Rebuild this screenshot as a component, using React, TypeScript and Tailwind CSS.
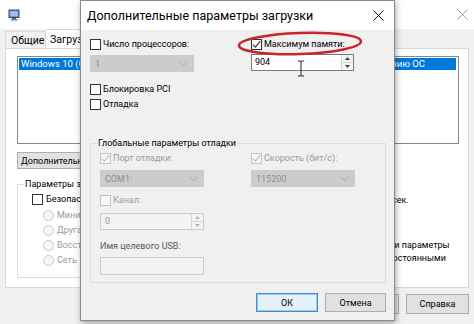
import React from "react";

function Check({ checked, disabled }: { checked?: boolean; disabled?: boolean }) {
  return (
    <span
      className={
        disabled
          ? "w-[11px] h-[11px] border border-[#c4c4c4] bg-[#f7f7f7] flex items-center justify-center shrink-0"
          : "w-[11px] h-[11px] border border-[#333333] bg-white flex items-center justify-center shrink-0"
      }
    >
      {checked && (
        <svg width="9" height="9" viewBox="0 0 9 9">
          <path d="M0.8 4.6 L3.4 7.2 L8.3 1.2" stroke={disabled ? "#bdbdbd" : "#333333"} fill="none" strokeWidth="1.1" />
        </svg>
      )}
    </span>
  );
}

function Radio() {
  return <span className="w-[11px] h-[11px] rounded-full border border-[#c8c8c8] bg-[#f7f7f7] shrink-0" />;
}

function Chevron() {
  return (
    <svg width="9" height="6" viewBox="0 0 9 6">
      <path d="M0.5 0.8 L4.5 4.8 L8.5 0.8" stroke="#a8a8a8" fill="none" strokeWidth="1" />
    </svg>
  );
}

function Combo({ text }: { text: string }) {
  return (
    <div className="w-[104px] h-[17px] bg-[#cccccc] flex items-center justify-between pl-[5px] pr-[6px] text-[#8e8e8e]">
      <span>{text}</span>
      <Chevron />
    </div>
  );
}

function SpinArrows({ disabled }: { disabled?: boolean }) {
  const c = disabled ? "#b5b5b5" : "#404040";
  return (
    <div className="w-[12px] h-full flex flex-col border-l border-[#d6d6d6]">
      <div className="flex-1 flex items-center justify-center bg-[#f4f4f4] border-b border-[#d6d6d6]">
        <svg width="5" height="3" viewBox="0 0 5 3">
          <path d="M0 3 L2.5 0 L5 3 Z" fill={c} />
        </svg>
      </div>
      <div className="flex-1 flex items-center justify-center bg-[#f4f4f4]">
        <svg width="5" height="3" viewBox="0 0 5 3">
          <path d="M0 0 L2.5 3 L5 0 Z" fill={c} />
        </svg>
      </div>
    </div>
  );
}

function CloseX({ color }: { color: string }) {
  return (
    <svg width="11" height="11" viewBox="0 0 11 11">
      <path d="M0.5 0.5 L10.5 10.5 M10.5 0.5 L0.5 10.5" stroke={color} strokeWidth="1" />
    </svg>
  );
}

function MonitorIcon() {
  return (
    <svg width="12" height="12" viewBox="0 0 12 12">
      <rect x="1" y="1" width="10" height="7.5" fill="#5b8fc9" stroke="#3a4a5c" strokeWidth="1" />
      <rect x="2.2" y="2.2" width="7.6" height="5" fill="#9cc4ea" />
      <rect x="4" y="9" width="4" height="1.2" fill="#4a5563" />
      <rect x="2.5" y="10.2" width="7" height="1.3" fill="#6b7582" />
    </svg>
  );
}

function Btn({ children, def }: { children: React.ReactNode; def?: boolean }) {
  return (
    <div
      className={
        def
          ? "h-[19px] w-[62px] bg-[#e5f1fb] border border-[#3f8fd8] shadow-[inset_0_0_0_1px_#9fc8ec] flex items-center justify-center"
          : "h-[19px] w-[61px] bg-[#e1e1e1] border border-[#adadad] flex items-center justify-center"
      }
    >
      {children}
    </div>
  );
}

export default function App() {
  return (
    <div className="relative w-[474px] h-[324px] overflow-hidden bg-[#f0f0f0] font-['Roboto',sans-serif] text-[9px] leading-[14px] text-black">
      {/* Background window (msconfig) */}
      <div className="flex flex-col h-full">
        <div className="h-[29px] shrink-0 bg-white flex items-center justify-between pl-[8px] pr-[6px]">
          <MonitorIcon />
          <CloseX color="#9a9a9a" />
        </div>
        <div className="flex flex-col px-[5px]">
          <div className="flex items-end h-[20px]">
            <div className="h-[18px] w-[41px] pl-[5px] flex items-center border border-b-0 border-[#d9d9d9] bg-[#f0f0f0] text-[10.5px] whitespace-nowrap">
              Общие
            </div>
            <div className="h-[20px] w-[62px] pl-[4px] flex items-center border border-b-0 border-l-0 border-[#d9d9d9] bg-white text-[10.5px] whitespace-nowrap">
              Загрузка
            </div>
          </div>
          <div className="h-[240px] bg-white border border-[#d9d9d9] -mt-px pl-[11px] pr-[9px] pt-[7px] flex flex-col">
            <div className="h-[88px] border border-[#828790] bg-white p-px">
              <div className="h-[12px] bg-[#0078d7] text-white text-[9.5px] flex items-center justify-between pl-[2px] pr-[31px] mr-[1px] whitespace-nowrap overflow-hidden">
                <span>Windows 10 (C:\WINDOWS) : Текущая ОС;</span>
                <span>Загружаемая по умолчанию ОС</span>
              </div>
            </div>
            <div className="mt-[8px] h-[17px] w-[150px] bg-[#e1e1e1] border border-[#adadad] flex items-center pl-[3px] whitespace-nowrap">
              Дополнительные параметры...
            </div>
            <div className="flex mt-[8px]">
              <fieldset className="w-[223px] h-[101px] border border-[#dcdcdc] pl-[14px]">
                <legend className="-ml-[8px] px-[1px] leading-[14px]">Параметры загрузки</legend>
                <div className="flex items-center gap-[3px] mt-[1px]">
                  <Check />
                  <span>Безопасный режим</span>
                </div>
                <div className="flex flex-col ml-[11px] mt-[2px] text-[#9a9a9a] gap-[1px]">
                  <div className="flex items-center gap-[3px]">
                    <Radio />
                    <span>Минимальная</span>
                  </div>
                  <div className="flex items-center gap-[3px]">
                    <Radio />
                    <span>Другая оболочка</span>
                  </div>
                  <div className="flex items-center gap-[3px]">
                    <Radio />
                    <span>Восстановить Active Directory</span>
                  </div>
                  <div className="flex items-center gap-[3px]">
                    <Radio />
                    <span>Сеть</span>
                  </div>
                </div>
              </fieldset>
              <div className="ml-[60px] flex flex-col">
                <div className="flex items-center mt-[14px] gap-[3px]">
                  <span className="w-[40px]">Таймаут:</span>
                  <div className="w-[46px] h-[17px] border border-[#7a7a7a] bg-white pl-[3px]">30</div>
                  <span>сек.</span>
                </div>
                <div className="flex items-start gap-[3px] mt-[31px] ml-[34px]">
                  <Check />
                  <span className="leading-[13px] whitespace-nowrap">
                    Сделать эти параметры
                    <br />
                    загрузки постоянными
                  </span>
                </div>
              </div>
            </div>
          </div>
          <div className="flex justify-end gap-[7px] mt-[6px]">
            <div className="h-[20px] w-[63px] bg-[#e1e1e1] border border-[#adadad] flex items-center justify-center">ОК</div>
            <div className="h-[20px] w-[63px] bg-[#e1e1e1] border border-[#adadad] flex items-center justify-center">Отмена</div>
            <div className="h-[20px] w-[63px] bg-[#e1e1e1] border border-[#adadad] flex items-center justify-center">Применить</div>
            <div className="h-[20px] w-[63px] bg-[#e1e1e1] border border-[#adadad] flex items-center justify-center">Справка</div>
          </div>
        </div>
      </div>

      {/* Dialog */}
      <div className="absolute left-[80px] top-0 w-[315px] h-[321px] bg-[#f0f0f0] border border-[#8a8a8a] shadow-[1px_2px_6px_rgba(0,0,0,0.35)] flex flex-col">
        <div className="h-[29px] shrink-0 bg-white flex items-center justify-between pl-[6px] pr-[10px] text-[12.5px]">
          <span>Дополнительные параметры загрузки</span>
          <CloseX color="#111111" />
        </div>
        <div className="flex flex-col pl-[9px] pr-[8px]">
          <div className="grid grid-cols-[161px_1fr] mt-[7px]">
            <div className="flex items-center gap-[2px] h-[14px]">
              <Check />
              <span>Число процессоров:</span>
            </div>
            <div className="flex items-center gap-[2px] h-[14px]">
              <Check checked />
              <span>Максимум памяти:</span>
            </div>
            <div className="mt-[4px]">
              <Combo text="1" />
            </div>
            <div className="mt-[3px] w-[103px] h-[17px] bg-white border border-[#7a7a7a] flex">
              <span className="flex-1 pl-[3px] leading-[15px]">904</span>
              <SpinArrows />
            </div>
          </div>
          <div className="flex items-center gap-[2px] h-[14px] mt-[10px]">
            <Check />
            <span>Блокировка PCI</span>
          </div>
          <div className="flex items-center gap-[2px] h-[14px] mt-[1px]">
            <Check />
            <span>Отладка</span>
          </div>
          <fieldset className="mt-[24px] border border-[#dcdcdc] pl-[9px] pb-[7px]">
            <legend className="-ml-[3px] px-[1px] leading-[16px]">Глобальные параметры отладки</legend>
            <div className="grid grid-cols-[151px_1fr] text-[#9a9a9a]">
              <div className="flex items-center gap-[2px] h-[14px]">
                <Check checked disabled />
                <span>Порт отладки:</span>
              </div>
              <div className="flex items-center gap-[2px] h-[14px]">
                <Check checked disabled />
                <span>Скорость (бит/с):</span>
              </div>
              <div className="mt-[5px]">
                <Combo text="COM1:" />
              </div>
              <div className="mt-[5px]">
                <Combo text="115200" />
              </div>
            </div>
            <div className="flex items-center gap-[2px] h-[14px] mt-[6px] text-[#9a9a9a]">
              <Check disabled />
              <span>Канал:</span>
            </div>
            <div className="mt-[6px] w-[104px] h-[17px] bg-[#f3f3f3] border border-[#cccccc] flex text-[#9a9a9a]">
              <span className="flex-1 pl-[4px] leading-[15px]">0</span>
              <SpinArrows disabled />
            </div>
            <div className="mt-[9px] h-[14px] text-[#5a5a5a]">Имя целевого USB:</div>
            <div className="mt-[4px] w-[104px] h-[18px] bg-[#f3f3f3] border border-[#cccccc]" />
          </fieldset>
          <div className="flex justify-end gap-[7px] mt-[10px]">
            <Btn def>ОК</Btn>
            <Btn>Отмена</Btn>
          </div>
        </div>
      </div>

      {/* Red annotation ellipse */}
      <svg className="absolute left-[236px] top-[30px] -rotate-2" width="128" height="27" viewBox="0 0 128 27">
        <ellipse cx="64" cy="13.5" rx="61" ry="10.5" stroke="#c8262c" strokeWidth="2.6" fill="none" />
      </svg>

      {/* I-beam cursor */}
      <svg className="absolute left-[297px] top-[60px]" width="8" height="17" viewBox="0 0 8 17">
        <path d="M1 1 H3 Q4 1 4 2 Q4 1 5 1 H7 M4 2 V15 M1 16 H3 Q4 16 4 15 Q4 16 5 16 H7" stroke="#222" strokeWidth="1" fill="none" />
      </svg>
    </div>
  );
}
